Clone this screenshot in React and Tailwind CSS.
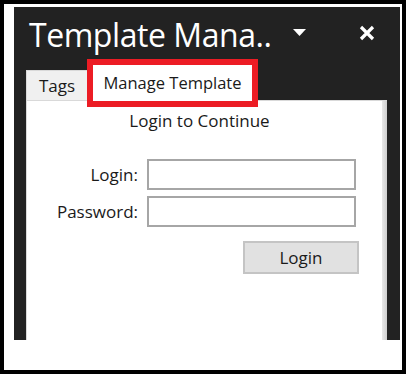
const font = { fontFamily: '"Open Sans", "Noto Sans", sans-serif' };

export default function App() {
  return (
    <div className="w-[406px] h-[374px] bg-black p-[4px]" style={font}>
      <div className="w-full h-full bg-white pl-[10px] pt-[3px] pr-[2px] pb-[30px]">
        <div className="relative h-full bg-[#222222] flex flex-col pl-[12px] pr-[13px]">
          {/* title bar */}
          <div className="h-[52px] flex items-center pl-[3px] shrink-0">
            <span className="text-[32px] leading-none text-white tracking-[-0.45px] mt-[4px]">Template Mana..</span>
            <div className="ml-auto flex items-center mt-[0px]">
              <svg width="13" height="7" viewBox="0 0 13 7" className="mr-[53px] mt-[-2px]">
                <path d="M0 0 H13 L6.5 7 Z" fill="#ffffff" />
              </svg>
              <svg width="16" height="16" viewBox="0 0 16 16" className="mr-[12px]">
                <path d="M2 2 L14 14 M14 2 L2 14" stroke="#ffffff" strokeWidth="3.2" />
              </svg>
            </div>
          </div>

          {/* tabs */}
          <div className="flex items-end h-[41px] shrink-0">
            <div className="h-[30px] w-[62px] bg-[#f0f0f0] border border-b-0 border-[#d9d9d9] flex items-center justify-center text-[17px] text-[#1a1a1a] pt-[1px]">
              Tags
            </div>
            <div className="h-[37px] w-[166px] bg-white flex items-center justify-center text-[16.5px] text-[#1a1a1a] mb-[-1px] relative z-10 pt-[2px] pl-[3px]">
              Manage Template
            </div>
          </div>

          {/* content */}
          <div className="flex-1 bg-white border-t border-l border-[#d9d9d9] flex">
            <div className="flex-1 flex flex-col">
              <div className="text-center text-[17px] leading-[24px] text-[#1a1a1a] pt-[8px] pr-[10px]">Login to Continue</div>
              <div className="mt-[26px] flex flex-col gap-[6px]">
                <div className="flex items-center">
                  <span className="w-[111px] text-right text-[17px] text-[#1a1a1a]">Login:</span>
                  <div className="ml-[9px] w-[209px] h-[31px] border-2 border-[#a6a6a6] bg-white" />
                </div>
                <div className="flex items-center">
                  <span className="w-[111px] text-right text-[17px] text-[#1a1a1a]">Password:</span>
                  <div className="ml-[9px] w-[209px] h-[31px] border-2 border-[#a6a6a6] bg-white" />
                </div>
              </div>
              <div className="mt-[14px] flex">
                <div className="ml-[216px] w-[116px] h-[33px] bg-[#e1e1e1] border-2 border-[#c4c4c4] flex items-center justify-center text-[17px] text-[#1a1a1a]">
                  Login
                </div>
              </div>
            </div>
            <div className="w-[5px] bg-gradient-to-r from-[#e8e8e8] to-[#cfcfcf]" />
          </div>

          {/* red highlight annotation */}
          <div className="absolute left-[73px] top-[52px] w-[171px] h-[48px] border-[6px] border-[#ec1c24] z-20 pointer-events-none" />
        </div>
      </div>
    </div>
  );
}
